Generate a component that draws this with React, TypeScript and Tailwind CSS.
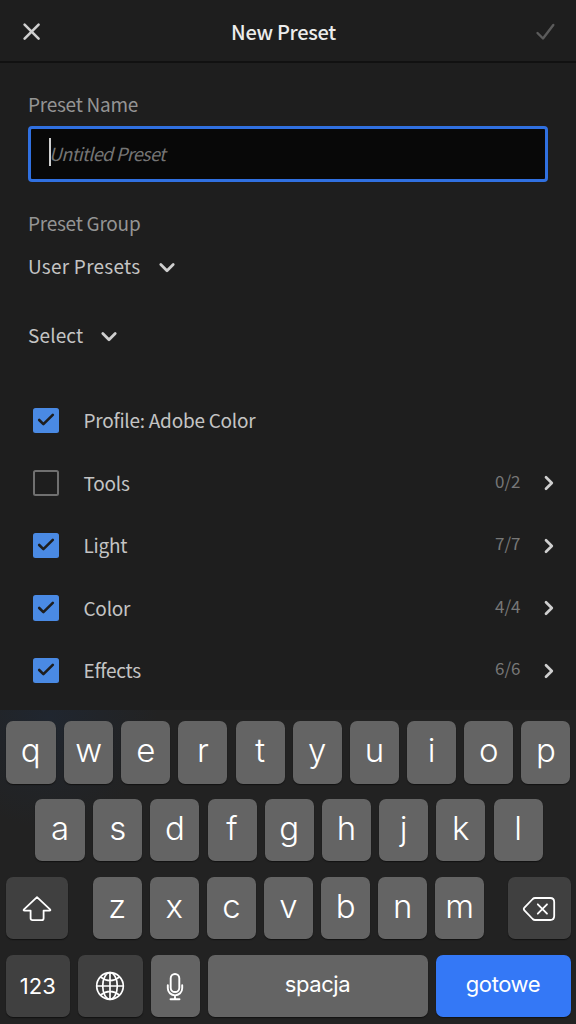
import { useState } from 'react'
import clsx from 'clsx'

const LETTERS_TOP = ['q', 'w', 'e', 'r', 't', 'y', 'u', 'i', 'o', 'p']
const LETTERS_MIDDLE = ['a', 's', 'd', 'f', 'g', 'h', 'j', 'k', 'l']
const LETTERS_BOTTOM = ['z', 'x', 'c', 'v', 'b', 'n', 'm']

const INITIAL_SETTINGS = [
  { name: 'Profile: Adobe Color', count: null, checked: true },
  { name: 'Tools', count: '0/2', checked: false },
  { name: 'Light', count: '7/7', checked: true },
  { name: 'Color', count: '4/4', checked: true },
  { name: 'Effects', count: '6/6', checked: true },
]

function ChevronDown() {
  return (
    <svg className="mt-[4px]" width="18" height="12" viewBox="0 0 18 12" fill="none" stroke="#cfcfcf" strokeWidth="2.8" strokeLinecap="round" strokeLinejoin="round">
      <path d="M2.8 2.6 9 8.8l6.2-6.2" />
    </svg>
  )
}

function ChevronRight() {
  return (
    <svg className="mt-px" width="12" height="18" viewBox="0 0 12 18" fill="none" stroke="#cfcfcf" strokeWidth="2.7" strokeLinecap="round" strokeLinejoin="round">
      <path d="M3 3.2 8.8 9 3 14.8" />
    </svg>
  )
}

function Checkbox({ checked, onClick }: { checked: boolean; onClick: () => void }) {
  return (
    <button
      onClick={onClick}
      className={clsx(
        'flex h-[25.5px] w-[25.5px] items-center justify-center rounded-[2.5px]',
        checked ? 'bg-[#4a8ae4]' : 'border-2 border-[#707070]'
      )}
    >
      {checked && (
        <svg width="18" height="16" viewBox="0 0 18 16" fill="none" stroke="#1e1e1e" strokeWidth="2.6" strokeLinecap="round" strokeLinejoin="round">
          <path d="M2.2 8 6.4 12.2 15.8 2.9" />
        </svg>
      )}
    </button>
  )
}

function LetterKey({ letter }: { letter: string }) {
  return (
    <button className="flex h-[62.5px] w-[49px] items-center justify-center rounded-[7px] bg-[#646464] pb-[4px] text-[33px] leading-none font-light shadow-[0_1px_1px_#121212]">
      {letter}
    </button>
  )
}

function Keyboard() {
  return (
    <div className="flex h-[314px] flex-col gap-[15.4px] bg-[#222222] bg-[radial-gradient(circle_at_48px_8px,#20262f_0px,#222222_110px)] px-[5.5px] pt-[11px] font-[Inter,sans-serif] text-white">
      <div className="flex justify-between [&>:first-child]:w-[50.5px]">
        {LETTERS_TOP.map((letter) => (
          <LetterKey key={letter} letter={letter} />
        ))}
      </div>
      <div className="flex justify-between pr-[28px] pl-[29.5px] [&>:first-child]:w-[50px]">
        {LETTERS_MIDDLE.map((letter) => (
          <LetterKey key={letter} letter={letter} />
        ))}
      </div>
      <div className="flex justify-between">
        <button className="flex h-[62.5px] w-[62.5px] items-center justify-center rounded-[7px] bg-[#404040] shadow-[0_1px_1px_#121212]">
          <svg className="mt-0.5 ml-px" width="30" height="28" viewBox="0 0 30 28" fill="none" stroke="white" strokeWidth="1.8" strokeLinejoin="round">
            <path d="M15 2.2 28 14.4q1 1.2-.6 1.2H21.6v7.6q0 2-2 2H10.6q-2 0-2-2V15.6H2.6Q1 15.6 2 14.4Z" />
          </svg>
        </button>
        <div className="ml-px flex w-[391.5px] justify-between">
          {LETTERS_BOTTOM.map((letter) => (
            <LetterKey key={letter} letter={letter} />
          ))}
        </div>
        <button className="flex h-[62.5px] w-[62.5px] items-center justify-center rounded-[7px] bg-[#404040] shadow-[0_1px_1px_#121212]">
          <svg className="mt-0.5" width="34" height="26" viewBox="0 0 34 26" fill="none" stroke="white" strokeWidth="1.8" strokeLinecap="round" strokeLinejoin="round">
            <path d="M13 2H28.2Q32.2 2 32.2 6V20Q32.2 24 28.2 24H13Q11.7 24 10.7 23L2.4 14.3Q1.2 13 2.4 11.7L10.7 3Q11.7 2 13 2Z" />
            <path d="m15.8 8.3 9.2 9.4M25 8.3l-9.2 9.4" />
          </svg>
        </button>
      </div>
      <div className="flex justify-between text-[22px] leading-none">
        <button className="flex h-[62.5px] w-[64.5px] items-center justify-center rounded-[7px] bg-[#404040] shadow-[0_1px_1px_#121212]">
          123
        </button>
        <button className="flex h-[62.5px] w-[64.5px] items-center justify-center rounded-[7px] bg-[#404040] shadow-[0_1px_1px_#121212]">
          <svg className="mt-px" width="30" height="30" viewBox="0 0 30 30" fill="none" stroke="white" strokeWidth="1.7">
            <circle cx="15" cy="15" r="13.3" />
            <ellipse cx="15" cy="15" rx="7.3" ry="13.3" />
            <path d="M15 1.7v26.6M1.7 15h26.6M5.4 5.8Q15 13.3 24.6 5.8M5.4 24.2Q15 16.7 24.6 24.2" />
          </svg>
        </button>
        <button className="flex h-[62.5px] w-[49px] items-center justify-center rounded-[7px] bg-[#646464] shadow-[0_1px_1px_#121212]">
          <svg className="mt-0.5" width="20" height="30" viewBox="0 0 20 30" fill="none" stroke="white" strokeWidth="1.9" strokeLinecap="round">
            <rect x="5.7" y="2" width="8.6" height="18" rx="4.3" />
            <path d="M2.8 13.2v3a7.2 7.2 0 0 0 14.4 0v-3M10 23.4v3.8M5.5 27.2h9" />
          </svg>
        </button>
        <button className="flex h-[62.5px] w-[220px] items-center justify-center rounded-[7px] bg-[#646464] pb-[3px] tracking-[-0.4px] shadow-[0_1px_1px_#121212]">
          spacja
        </button>
        <button className="flex h-[62.5px] w-[135px] items-center justify-center rounded-[7px] bg-[#3478f6] pb-[3px] tracking-[-0.4px] shadow-[0_1px_1px_#121212]">
          gotowe
        </button>
      </div>
    </div>
  )
}

export default function App() {
  const [name, setName] = useState('')
  const [settings, setSettings] = useState(INITIAL_SETTINGS)

  function toggle(index: number) {
    setSettings(settings.map((s, i) => (i === index ? { ...s, checked: !s.checked } : s)))
  }

  return (
    <div className="flex h-[1024px] w-[576px] flex-col overflow-hidden bg-[#1e1e1e] font-['Noto_Sans_CJK_SC',sans-serif] text-[19px] leading-[28px] text-[#c4c4c4]">
      <header className="flex h-[63px] items-center justify-between border-b-2 border-[#111111] px-[22px]">
        <button className="pt-0.5">
          <svg width="19" height="19" viewBox="0 0 19 19" fill="none" stroke="#cfcfcf" strokeWidth="2.6" strokeLinecap="round">
            <path d="m2.6 2.6 14 14M16.6 2.6l-14 14" />
          </svg>
        </button>
        <h1 className="mr-[9px] pt-0.5 text-[20px] font-medium tracking-[-0.3px] text-[#ececec]">New Preset</h1>
        <button className="-mr-px pt-0.5">
          <svg width="20" height="19" viewBox="0 0 20 19" fill="none" stroke="#5b5b5b" strokeWidth="2.4" strokeLinecap="round" strokeLinejoin="round">
            <path d="m2.5 11 5.5 5.5L18.3 3" />
          </svg>
        </button>
      </header>

      <main className="flex h-[647px] flex-col px-7 pt-[27px]">
        <label className="tracking-[-0.25px] text-[#949494]">Preset Name</label>
        <div className="relative mt-[7.5px] h-[56px] shrink-0">
          <input
            value={name}
            onChange={(e) => setName(e.target.value)}
            placeholder="Untitled Preset"
            className="block h-full w-full rounded-[4px] border-3 border-[#3070e0] bg-[#080808] px-[18px] pb-px text-[18px] tracking-[-0.65px] italic outline-none placeholder:text-[#757575]"
          />
          <span className="absolute top-[12.5px] left-[20.5px] h-[28px] w-[2.5px] bg-[#d0d0d0]" />
        </div>

        <div className="mt-[27px] tracking-[-0.25px] text-[#949494]">Preset Group</div>
        <button className="mt-[15px] flex items-center gap-[18px] self-start">
          <span className="tracking-[0.24px]">User Presets</span>
          <ChevronDown />
        </button>
        <button className="mt-[41.5px] flex items-center gap-[17px] self-start">
          <span className="tracking-[0.15px]">Select</span>
          <ChevronDown />
        </button>

        <ul className="-mr-[7px] mt-[40px]">
          {settings.map((item, i) => (
            <li key={item.name} className="flex h-[62.5px] items-center pl-[5px]">
              <Checkbox checked={item.checked} onClick={() => toggle(i)} />
              <span className="ml-[25px] tracking-[-0.25px]">{item.name}</span>
              {item.count && (
                <div className="ml-auto flex items-center gap-[22.5px]">
                  <span className="-mt-1 text-[17px] text-[#777777]">{item.count}</span>
                  <ChevronRight />
                </div>
              )}
            </li>
          ))}
        </ul>
      </main>

      <Keyboard />
    </div>
  )
}
